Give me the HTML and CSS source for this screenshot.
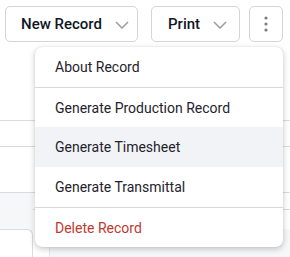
FILE: index.html
```html
<!DOCTYPE html>
<html lang="en">
<head>
    <meta charset="UTF-8">
    <meta name="viewport" content="width=device-width, initial-scale=1.0">
    <title>Record Actions</title>
    <link rel="stylesheet" href="styles.css">
</head>
<body>
    <div class="toolbar">
        <button class="btn btn-new">New Record
            <svg class="chevron" width="14" height="8" viewBox="0 0 14 8"><path d="M1 1l6 6 6-6" fill="none" stroke="#9a9ca4" stroke-width="1.5"/></svg>
        </button>
        <button class="btn btn-print">Print
            <svg class="chevron" width="14" height="8" viewBox="0 0 14 8"><path d="M1 1l6 6 6-6" fill="none" stroke="#9a9ca4" stroke-width="1.5"/></svg>
        </button>
        <button class="btn btn-more">
            <svg width="4" height="16" viewBox="0 0 4 16"><circle cx="2" cy="2" r="1.6" fill="#7a7d86"/><circle cx="2" cy="8" r="1.6" fill="#7a7d86"/><circle cx="2" cy="14" r="1.6" fill="#7a7d86"/></svg>
        </button>
    </div>

    <!-- page content behind the menu -->
    <div class="sheet">
        <div class="row row-a"></div>
        <div class="row row-b"></div>
        <div class="row-band">
            <div class="band-left"></div>
            <div class="band-right"></div>
        </div>
        <div class="row-cards">
            <div class="card"></div>
            <div class="col-line"></div>
        </div>
    </div>

    <div class="menu">
        <div class="menu-item">About Record</div>
        <div class="menu-item sep-top">Generate Production Record</div>
        <div class="menu-item active">Generate Timesheet</div>
        <div class="menu-item">Generate Transmittal</div>
        <div class="menu-item sep-top danger">Delete Record</div>
    </div>
</body>
</html>
```

FILE: styles.css
```css
body {
    margin: 0;
    width: 290px;
    height: 257px;
    overflow: hidden;
    position: relative;
    background-color: #fff;
    font-family: Roboto, "Noto Sans", sans-serif;
}

.toolbar {
    display: flex;
    padding: 6px 0 0 5px;
    height: 36px;
}

.btn {
    display: flex;
    align-items: center;
    justify-content: space-between;
    height: 36px;
    box-sizing: border-box;
    background-color: #fff;
    border: 1px solid #d3d5da;
    border-radius: 5px;
    font-family: inherit;
    font-size: 15px;
    font-weight: 500;
    color: #0f1626;
    padding: 0 8px 0 15px;
}

.btn-new {
    width: 133px;
}

.btn-print {
    width: 89px;
    margin-left: 13px;
    padding-left: 16px;
    padding-right: 12px;
}

.btn-more {
    width: 34px;
    margin-left: 9px;
    justify-content: center;
    padding: 0;
}

.chevron {
    margin-top: 1px;
}

.sheet {
    padding-top: 78px;
}

.row {
    border-top: 1px solid #d9dbe3;
}

.row-a {
    height: 25px;
}

.row-b {
    height: 45px;
}

.row-band {
    display: flex;
    height: 36px;
    border-top: 1px solid #d9dbe3;
}

.band-left {
    width: 33px;
    background-color: #f6f7f9;
}

.band-right {
    flex: 1;
    height: 16px;
    border-bottom: 1px solid #d9dbe3;
}

.row-cards {
    display: flex;
    height: 40px;
    background-color: #f6f7f9;
}

.card {
    width: 32px;
    background-color: #fff;
    border-top: 1px solid #d9dbe3;
    border-right: 1px solid #d9dbe3;
    border-top-right-radius: 6px;
}

.col-line {
    width: 16px;
    border-right: 1px solid #e3e5ea;
    background-color: #fff;
}

.menu {
    position: absolute;
    left: 35px;
    top: 47px;
    width: 248px;
    background-color: #fff;
    border-radius: 7px;
    box-shadow: 0 2px 6px rgba(0, 0, 0, 0.22), 0 0 1px rgba(0, 0, 0, 0.2);
    overflow: hidden;
}

.menu-item {
    height: 40px;
    box-sizing: border-box;
    display: flex;
    align-items: center;
    padding-left: 20px;
    font-size: 14px;
    color: #1f232b;
}

.sep-top {
    border-top: 1px solid #d6d8e0;
}

.active {
    background-color: #f2f3f7;
}

.danger {
    color: #c0392f;
}
```
